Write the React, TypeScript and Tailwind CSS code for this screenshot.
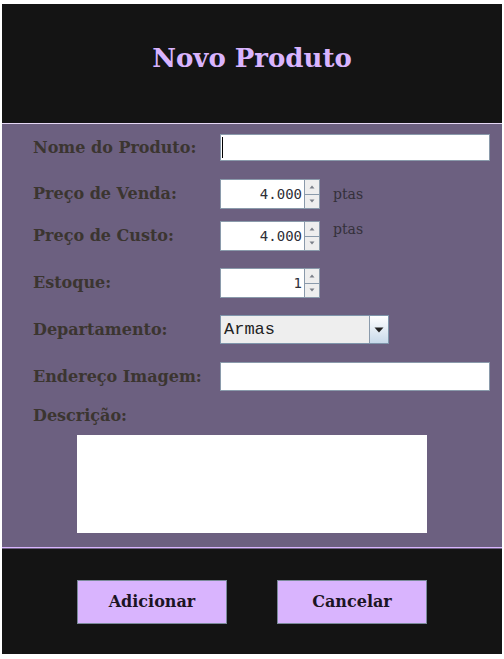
import React from 'react';

const serif = { fontFamily: '"DejaVu Serif", "Liberation Serif", serif' };

const Label = ({ children }: { children: React.ReactNode }) => (
  <div className="w-[187px] shrink-0 text-[16px] leading-[24px] font-bold text-[#3b3530]" style={serif}>
    {children}
  </div>
);

const Spinner = ({ value }: { value: string }) => (
  <div className="flex h-[30px]">
    <div
      className="w-[84px] h-full bg-white border border-[#8a9aab] border-r-0 flex items-center justify-end pr-[2px] pt-[1px] text-[14px] text-[#2f2f38]"
      style={{ fontFamily: '"DejaVu Sans Mono", monospace' }}
    >
      {value}
    </div>
    <div className="w-[16px] h-full flex flex-col">
      <div className="flex-1 bg-[#eeeeee] border border-[#8a9aab] flex items-center justify-center">
        <svg width="6" height="4" viewBox="0 0 6 4"><path d="M3 0.5 L5.5 3.5 L0.5 3.5 Z" fill="#7a7f88" /></svg>
      </div>
      <div className="flex-1 bg-[#eeeeee] border border-t-0 border-[#8a9aab] flex items-center justify-center">
        <svg width="6" height="4" viewBox="0 0 6 4"><path d="M0.5 0.5 L5.5 0.5 L3 3.5 Z" fill="#7a7f88" /></svg>
      </div>
    </div>
  </div>
);

const Ptas = ({ className = '' }: { className?: string }) => (
  <span className={`ml-[13px] text-[14px] leading-[16px] text-[#34303a] ${className}`} style={serif}>
    ptas
  </span>
);

export default function App() {
  return (
    <div className="w-[504px] h-[659px] bg-white pt-[4px] pl-[2px]">
      <div className="w-[500px] h-[650px] bg-[#141414] flex flex-col">
        {/* header */}
        <div className="h-[119px] flex justify-center pt-[35px]">
          <h1 className="text-[26px] leading-[39px] font-bold text-[#d9b4fe]" style={serif}>
            Novo Produto
          </h1>
        </div>

        {/* form panel */}
        <div className="bg-[#6c6080] border-t border-[#e6d8f6] border-b border-b-[#d9b4fe] pl-[31px] pb-[14px]">
          <div className="flex items-center h-[27px] mt-[10px]">
            <Label>Nome do Produto:</Label>
            <div className="w-[270px] h-full bg-white border border-[#8a9aab] flex items-center pl-[1px]">
              <span className="w-[1px] h-[21px] bg-black" />
            </div>
          </div>

          <div className="flex items-center h-[30px] mt-[18px]">
            <Label>Preço de Venda:</Label>
            <Spinner value="4.000" />
            <Ptas />
          </div>

          <div className="flex items-center h-[30px] mt-[12px]">
            <Label>Preço de Custo:</Label>
            <Spinner value="4.000" />
            <Ptas className="self-start" />
          </div>

          <div className="flex items-center h-[30px] mt-[17px]">
            <Label>Estoque:</Label>
            <Spinner value="1" />
          </div>

          <div className="flex items-center h-[29px] mt-[17px]">
            <Label>Departamento:</Label>
            <div className="w-[169px] h-full flex border border-[#7f95ab] bg-[#eeeeee]">
              <div
                className="flex-1 flex items-center pl-[3px] text-[17px] text-[#222]"
                style={{ fontFamily: '"Liberation Mono", "Courier New", monospace' }}
              >
                Armas
              </div>
              <div className="w-[19px] h-full border-l border-[#8a9aab] bg-gradient-to-b from-white to-[#c8d9ea] flex items-center justify-center">
                <svg width="10" height="6" viewBox="0 0 10 6"><path d="M0.5 0.5 L9.5 0.5 L5 5.5 Z" fill="#222" /></svg>
              </div>
            </div>
          </div>

          <div className="flex items-center h-[29px] mt-[18px]">
            <Label>Endereço Imagem:</Label>
            <div className="w-[270px] h-full bg-white border border-[#8a9aab]" />
          </div>

          <div className="mt-[13px]">
            <Label>Descrição:</Label>
          </div>

          <div className="ml-[44px] mt-[7px] w-[350px] h-[98px] bg-white" />
        </div>

        {/* footer */}
        <div className="flex-1 flex justify-center gap-[50px] pt-[31px] border-t border-[#6c6080]">
          {['Adicionar', 'Cancelar'].map((t) => (
            <button
              key={t}
              className="w-[150px] h-[44px] bg-[#d9b4fe] border border-[#7a8a99] text-[16px] font-bold text-[#1c1424]"
              style={serif}
            >
              {t}
            </button>
          ))}
        </div>
      </div>
    </div>
  );
}
